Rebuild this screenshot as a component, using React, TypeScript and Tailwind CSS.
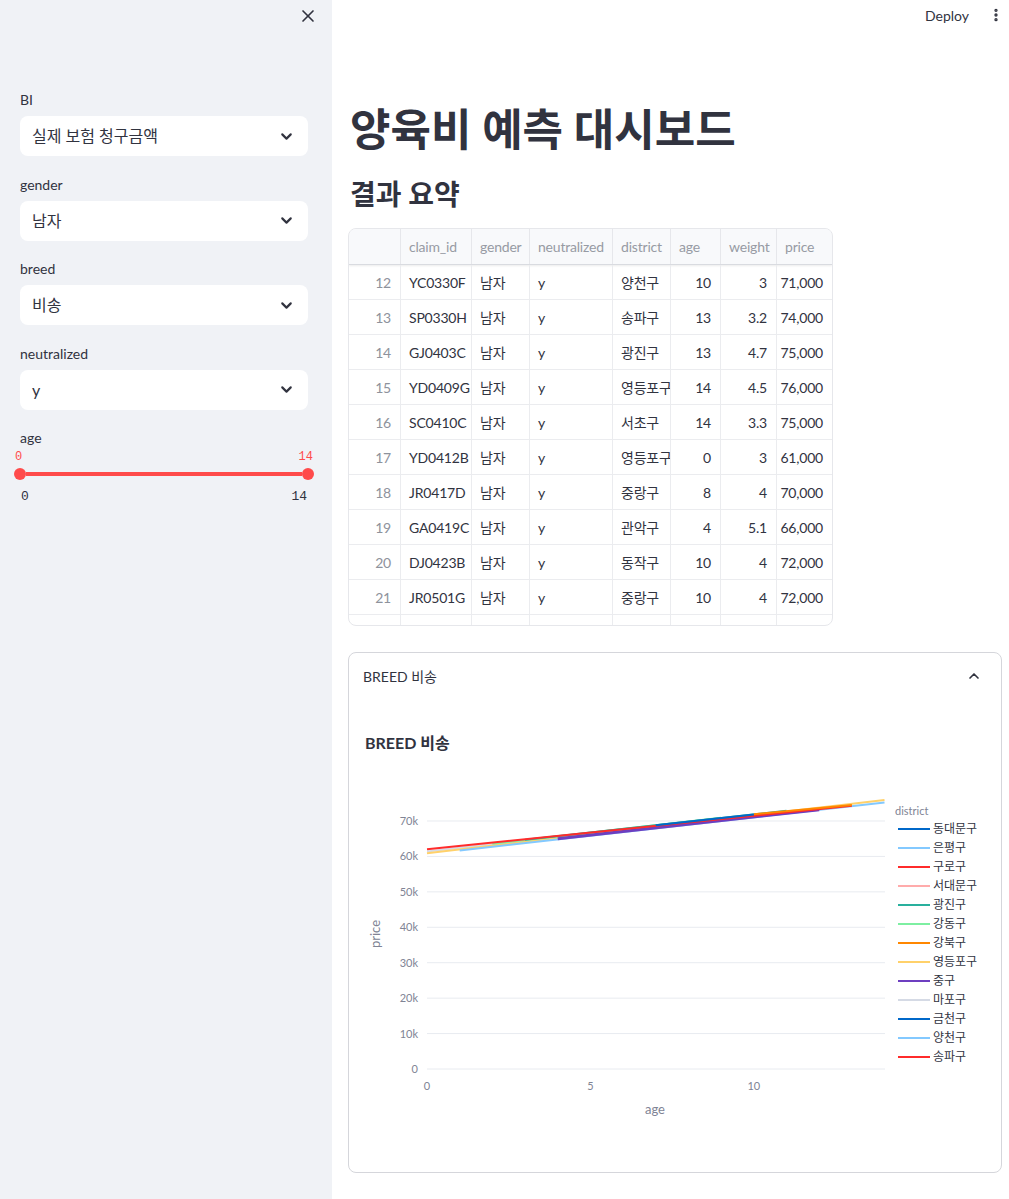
import { X, ChevronDown, ChevronUp, EllipsisVertical } from 'lucide-react'

const rows = [
  ['12', 'YC0330F', '남자', 'y', '양천구', '10', '3', '71,000'],
  ['13', 'SP0330H', '남자', 'y', '송파구', '13', '3.2', '74,000'],
  ['14', 'GJ0403C', '남자', 'y', '광진구', '13', '4.7', '75,000'],
  ['15', 'YD0409G', '남자', 'y', '영등포구', '14', '4.5', '76,000'],
  ['16', 'SC0410C', '남자', 'y', '서초구', '14', '3.3', '75,000'],
  ['17', 'YD0412B', '남자', 'y', '영등포구', '0', '3', '61,000'],
  ['18', 'JR0417D', '남자', 'y', '중랑구', '8', '4', '70,000'],
  ['19', 'GA0419C', '남자', 'y', '관악구', '4', '5.1', '66,000'],
  ['20', 'DJ0423B', '남자', 'y', '동작구', '10', '4', '72,000'],
  ['21', 'JR0501G', '남자', 'y', '중랑구', '10', '4', '72,000'],
  ['', '', '', '', '', '', '', ''],
]

const headers = ['', 'claim_id', 'gender', 'neutralized', 'district', 'age', 'weight', 'price']
const rightAligned = [0, 5, 6, 7]

const legend = [
  ['동대문구', '#0068c9'],
  ['은평구', '#83c9ff'],
  ['구로구', '#ff2b2b'],
  ['서대문구', '#ffabab'],
  ['광진구', '#29b09d'],
  ['강동구', '#7defa1'],
  ['강북구', '#ff8700'],
  ['영등포구', '#ffd16a'],
  ['중구', '#6d3fc0'],
  ['마포구', '#d5dae5'],
  ['금천구', '#0068c9'],
  ['양천구', '#83c9ff'],
  ['송파구', '#ff2b2b'],
]

const lines = [
  { c: '#d5dae5', a: [0, 8], p: [61400, 69700], w: 2 },
  { c: '#ffd16a', a: [0, 14], p: [60900, 75900], w: 2 },
  { c: '#83c9ff', a: [1, 14], p: [61700, 75200], w: 2 },
  { c: '#7defa1', a: [2, 9], p: [63600, 70900], w: 2 },
  { c: '#29b09d', a: [3, 11], p: [64700, 72900], w: 2 },
  { c: '#6d3fc0', a: [4, 12], p: [65000, 73200], w: 3 },
  { c: '#ff2b2b', a: [0, 13], p: [62000, 74300], w: 2 },
  { c: '#ff8700', a: [10, 13], p: [71900, 74500], w: 2 },
  { c: '#0068c9', a: [7, 10], p: [68800, 71800], w: 2 },
]

const px = (a: number) => 78 + a * 32.68
const py = (p: number) => 293 - p * 0.003543

const SelectBox = ({ label, value }: { label: string; value: string }) => (
  <div className="mb-[18.5px]">
    <div className="h-[20px] leading-[20px] mb-[6px] text-[14px] text-[#31333f]">{label}</div>
    <div className="h-[40px] rounded-[8px] bg-white flex items-center justify-between pl-[12px] pr-[13px]">
      <span className="text-[16px] text-[#31333f]">{value}</span>
      <ChevronDown size={17} strokeWidth={3} className="text-[#31333f]" />
    </div>
  </div>
)

const Chart = () => (
  <svg width={652} height={370} className="block">
    {[0, 10, 20, 30, 40, 50, 60, 70].map((k) => (
      <g key={k}>
        <line x1={78} x2={536} y1={py(k * 1000)} y2={py(k * 1000)} stroke="#e8ebf0" strokeWidth={1} />
        <text x={69} y={py(k * 1000) + 4} textAnchor="end" fontSize={11} fill="#808495">
          {k === 0 ? '0' : `${k}k`}
        </text>
      </g>
    ))}
    {[0, 5, 10].map((a) => (
      <text key={a} x={px(a)} y={314} textAnchor="middle" fontSize={11} fill="#808495">
        {a}
      </text>
    ))}
    {lines.map((l, i) => (
      <line
        key={i}
        x1={px(l.a[0])}
        y1={py(l.p[0])}
        x2={px(l.a[1])}
        y2={py(l.p[1])}
        stroke={l.c}
        strokeWidth={l.w}
      />
    ))}
    <text x={306} y={338} textAnchor="middle" fontSize={13} fill="#808495">
      age
    </text>
    <text x={31} y={158} textAnchor="middle" fontSize={13} fill="#808495" transform="rotate(-90 31 158)">
      price
    </text>
    <text x={546} y={39} fontSize={11} fill="#808495">
      district
    </text>
    {legend.map(([name, color], i) => (
      <g key={name + i}>
        <line x1={549} x2={581} y1={53 + i * 19} y2={53 + i * 19} stroke={color} strokeWidth={2} />
        <text x={584} y={57 + i * 19} fontSize={12} fill="#31333f">
          {name}
        </text>
      </g>
    ))}
  </svg>
)

export default function App() {
  return (
    <div className="flex w-[1009px] min-h-[1199px] font-['Lato','Noto_Sans_CJK_KR',sans-serif] text-[#31333f]">
      <aside className="w-[332px] shrink-0 bg-[#f0f2f6]">
        <div className="flex justify-end pt-[6px] pr-[14px]">
          <X size={20} strokeWidth={2} className="text-[#31333f]" />
        </div>
        <div className="pl-[20px] pr-[24px] pt-[64px]">
          <SelectBox label="BI" value="실제 보험 청구금액" />
          <SelectBox label="gender" value="남자" />
          <SelectBox label="breed" value="비송" />
          <SelectBox label="neutralized" value="y" />
          <div className="h-[20px] leading-[20px] text-[14px]">age</div>
          <div className="flex justify-between -ml-[5px] -mr-[5px] mt-[2px] h-[14px] leading-[14px] text-[12px] text-[#ff4b4b] font-['Liberation_Mono',monospace]">
            <span>0</span>
            <span>14</span>
          </div>
          <div className="flex items-center -mx-[6px] mt-[4px] h-[12px]">
            <div className="w-[12px] h-[12px] rounded-full bg-[#ff4b4b]" />
            <div className="flex-1 h-[4px] bg-[#ff4b4b]" />
            <div className="w-[12px] h-[12px] rounded-full bg-[#ff4b4b]" />
          </div>
          <div className="flex justify-between px-[1px] mt-[9px] h-[16px] leading-[16px] text-[13px] text-[#31333f] font-['Liberation_Mono',monospace]">
            <span>0</span>
            <span>14</span>
          </div>
        </div>
      </aside>

      <main className="flex-1 bg-white">
        <div className="h-[30px] flex items-center justify-end gap-[19px] pr-[5px]">
          <span className="text-[14px] text-[#31333f]">Deploy</span>
          <EllipsisVertical size={16} strokeWidth={3} className="text-[#31333f]" />
        </div>

        <div className="pl-[16px] pr-[7px]">
          <h1 className="mt-[74px] h-[50px] leading-[50px] text-[44px] font-bold pl-[2px]">양육비 예측 대시보드</h1>
          <h2 className="mt-[24px] h-[32px] leading-[32px] text-[28px] font-bold pl-[2px]">결과 요약</h2>

          <div className="mt-[18px] w-[485px] h-[398px] border border-[#e6e7eb] rounded-[8px] overflow-hidden text-[14px] tracking-[-0.2px]">
            <div className="grid grid-cols-[52px_71px_58px_83px_58px_50px_56px_55px] h-[36px] bg-[#f8f9fb] border-b border-[#d9dbe0] shadow-[0_1px_2px_rgba(0,0,0,0.08)]">
              {headers.map((h, i) => (
                <div
                  key={i}
                  className={`flex items-center px-[8px] text-[#979ba4] ${i < 7 ? 'border-r border-[#e6e7eb]' : ''}`}
                >
                  {h}
                </div>
              ))}
            </div>
            {rows.map((r, ri) => (
              <div key={ri} className="grid grid-cols-[52px_71px_58px_83px_58px_50px_56px_55px] h-[35px] border-b border-[#ebecef]">
                {r.map((v, i) => (
                  <div
                    key={i}
                    className={`flex items-center overflow-hidden whitespace-nowrap ${
                      rightAligned.includes(i) ? 'justify-end pr-[9px]' : 'pl-[8px]'
                    } ${i === 0 ? 'text-[#8e929c]' : 'text-[#31333f]'} ${i < 7 ? 'border-r border-[#ebecef]' : ''}`}
                  >
                    {v}
                  </div>
                ))}
              </div>
            ))}
          </div>

          <div className="mt-[26px] border border-[#d5d6db] rounded-[8px]">
            <div className="h-[46px] flex items-center justify-between pl-[14px] pr-[19px]">
              <span className="text-[14px] text-[#31333f]">BREED 비송</span>
              <ChevronUp size={16} strokeWidth={2.5} className="text-[#31333f]" />
            </div>
            <div className="pt-[32px] pb-[26px]">
              <div className="pl-[16px] h-[24px] leading-[24px] text-[16px] font-bold text-[#31333f]">BREED 비송</div>
              <div className="mt-[21px]">
                <Chart />
              </div>
            </div>
          </div>
        </div>
      </main>
    </div>
  )
}
